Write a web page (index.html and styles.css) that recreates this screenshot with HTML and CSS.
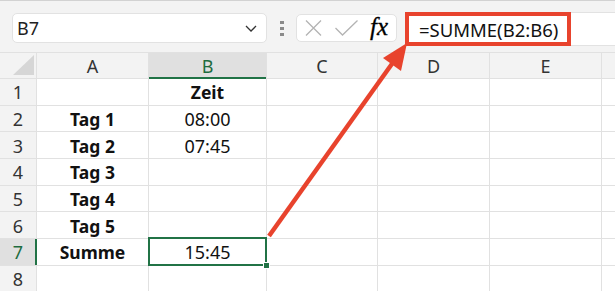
FILE: index.html
```html
<!DOCTYPE html>
<html lang="de">
<head>
  <title>Summe</title>
  <link rel="stylesheet" href="styles.css">
</head>
<body>
  <div class="sheet-app">
    <div class="toolbar">
      <div class="namebox">
        <span>B7</span>
        <svg width="12" height="7" viewBox="0 0 12 7"><polyline points="1,1 6,6 11,1" fill="none" stroke="#333" stroke-width="1.3"/></svg>
      </div>
      <div class="grip"><i></i><i></i><i></i></div>
      <div class="fx-buttons">
        <svg class="ico-x" width="17" height="16" viewBox="0 0 17 16"><path d="M1 0.5 L16 15.5 M16 0.5 L1 15.5" stroke="#b3b3b3" stroke-width="1.3" fill="none"/></svg>
        <svg class="ico-ok" width="23" height="16" viewBox="0 0 23 16"><polyline points="0.5,8 7.5,15 22.5,0.5" stroke="#b3b3b3" stroke-width="1.3" fill="none"/></svg>
        <span class="fx">fx</span>
      </div>
      <div class="formula">
        <span class="formula-ref">=SUMME(B2:B6)</span>
      </div>
    </div>

    <div class="grid">
      <div class="hd corner"><svg width="22" height="21" viewBox="0 0 22 21"><polygon points="21,0 21,20 0,20" fill="#d6d6d6"/></svg></div>
      <div class="hd">A</div>
      <div class="hd col-active">B</div>
      <div class="hd">C</div>
      <div class="hd">D</div>
      <div class="hd">E</div>
      <div class="hd"></div>

      <div class="hd">1</div>
      <div class="cell"></div>
      <div class="cell b">Zeit</div>
      <div class="cell"></div><div class="cell"></div><div class="cell"></div><div class="cell"></div>

      <div class="hd">2</div>
      <div class="cell b">Tag 1</div>
      <div class="cell">08:00</div>
      <div class="cell"></div><div class="cell"></div><div class="cell"></div><div class="cell"></div>

      <div class="hd">3</div>
      <div class="cell b">Tag 2</div>
      <div class="cell">07:45</div>
      <div class="cell"></div><div class="cell"></div><div class="cell"></div><div class="cell"></div>

      <div class="hd">4</div>
      <div class="cell b">Tag 3</div>
      <div class="cell"></div>
      <div class="cell"></div><div class="cell"></div><div class="cell"></div><div class="cell"></div>

      <div class="hd">5</div>
      <div class="cell b">Tag 4</div>
      <div class="cell"></div>
      <div class="cell"></div><div class="cell"></div><div class="cell"></div><div class="cell"></div>

      <div class="hd">6</div>
      <div class="cell b">Tag 5</div>
      <div class="cell"></div>
      <div class="cell"></div><div class="cell"></div><div class="cell"></div><div class="cell"></div>

      <div class="hd row-active">7</div>
      <div class="cell b">Summe</div>
      <div class="cell sel">15:45</div>
      <div class="cell"></div><div class="cell"></div><div class="cell"></div><div class="cell"></div>

      <div class="hd">8</div>
      <div class="cell"></div>
      <div class="cell"></div>
      <div class="cell"></div><div class="cell"></div><div class="cell"></div><div class="cell"></div>
    </div>

    <!-- annotation arrow from the selected cell to the formula -->
    <svg class="arrow" width="615" height="293" viewBox="0 0 615 293">
      <line x1="269" y1="236" x2="394" y2="61" stroke="#e8432d" stroke-width="4.5"/>
      <polygon points="407,43 383,58 401,71" fill="#e8432d"/>
    </svg>
  </div>
</body>
</html>
```

FILE: styles.css
```css
*,
*::before,
*::after {
  box-sizing: border-box;
}

body {
  margin: 0;
  background: #fff;
}

.sheet-app {
  position: relative;
  width: 615px;
  height: 293px;
  overflow: hidden;
  font-family: "Noto Sans", sans-serif;
  color: #111;
}

/* formula bar */
.toolbar {
  height: 52px;
  border-top: 1px solid #d2d2d2;
  background: #f3f3f3;
  display: flex;
  align-items: flex-start;
}

.namebox {
  margin: 12px 0 0 12px;
  width: 255px;
  height: 30px;
  background: #fff;
  border: 1px solid #e2e2e2;
  border-radius: 5px;
  display: flex;
  align-items: center;
  justify-content: space-between;
  padding: 0 9px 0 4px;
  font-size: 18px;
  color: #222;
}

.grip {
  margin: 20px 0 0 13px;
  width: 4px;
  display: flex;
  flex-direction: column;
  gap: 3px;
}

.grip i {
  display: block;
  width: 4px;
  height: 3px;
  background: #8a8a8a;
}

.fx-buttons {
  margin: 13px 0 0 12px;
  width: 101px;
  height: 28px;
  background: #fff;
  border: 1px solid #e2e2e2;
  border-radius: 5px;
  display: flex;
  align-items: center;
  padding-left: 8px;
}

.ico-x {
  margin-right: 13px;
}

.ico-ok {
  margin-right: 12px;
}

.fx {
  font-family: "Liberation Serif", serif;
  font-style: italic;
  font-size: 25px;
  line-height: 1;
  color: #000;
  margin-top: -4px;
  -webkit-text-stroke: 0.3px #000;
}

.formula {
  margin: 11px 0 0 8px;
  flex: 1;
  height: 34px;
  background: #fff;
  border-top: 1px solid #e2e2e2;
  border-bottom: 1px solid #e2e2e2;
}

.formula-ref {
  display: flex;
  align-items: center;
  margin-top: -1px;
  width: 166px;
  height: 34px;
  border: 4px solid #e8432d;
  padding-left: 10px;
  font-size: 18.5px;
  color: #111;
}

/* sheet */
.grid {
  display: grid;
  grid-template-columns: 36px 111px 117px 110px 111px 111px 1fr;
  grid-template-rows: 25px repeat(8, 25.67px);
  gap: 1px;
  padding-top: 1px;
  background: #e1e1e1;
}

.hd {
  background: #f3f3f3;
  color: #333;
  font-size: 18px;
  padding-top: 1px;
  display: flex;
  align-items: center;
  justify-content: center;
  position: relative;
}

.corner {
  align-items: flex-end;
  justify-content: flex-end;
  padding: 0 1px 2px 0;
}

.col-active,
.row-active {
  background: #e0e0e0;
  color: #1e6c3f;
}

.col-active::after {
  content: '';
  position: absolute;
  left: 0;
  right: 0;
  bottom: -1px;
  height: 2px;
  background: #217346;
}

.row-active::after {
  content: '';
  position: absolute;
  top: 0;
  bottom: 0;
  right: -1px;
  width: 2px;
  background: #217346;
}

.cell {
  background: #fff;
  font-size: 18px;
  padding-top: 1px;
  display: flex;
  align-items: center;
  justify-content: center;
  position: relative;
}

.cell.b {
  font-weight: bold;
  font-size: 17.5px;
}

.sel::after {
  content: '';
  position: absolute;
  top: -2px;
  left: -1px;
  right: -1px;
  bottom: -1px;
  border: 2px solid #217346;
}

.sel::before {
  content: '';
  position: absolute;
  right: -4px;
  bottom: -4px;
  width: 7px;
  height: 7px;
  background: #217346;
  border: 1px solid #fff;
  z-index: 1;
}

.arrow {
  position: absolute;
  top: 0;
  left: 0;
  pointer-events: none;
}
```
